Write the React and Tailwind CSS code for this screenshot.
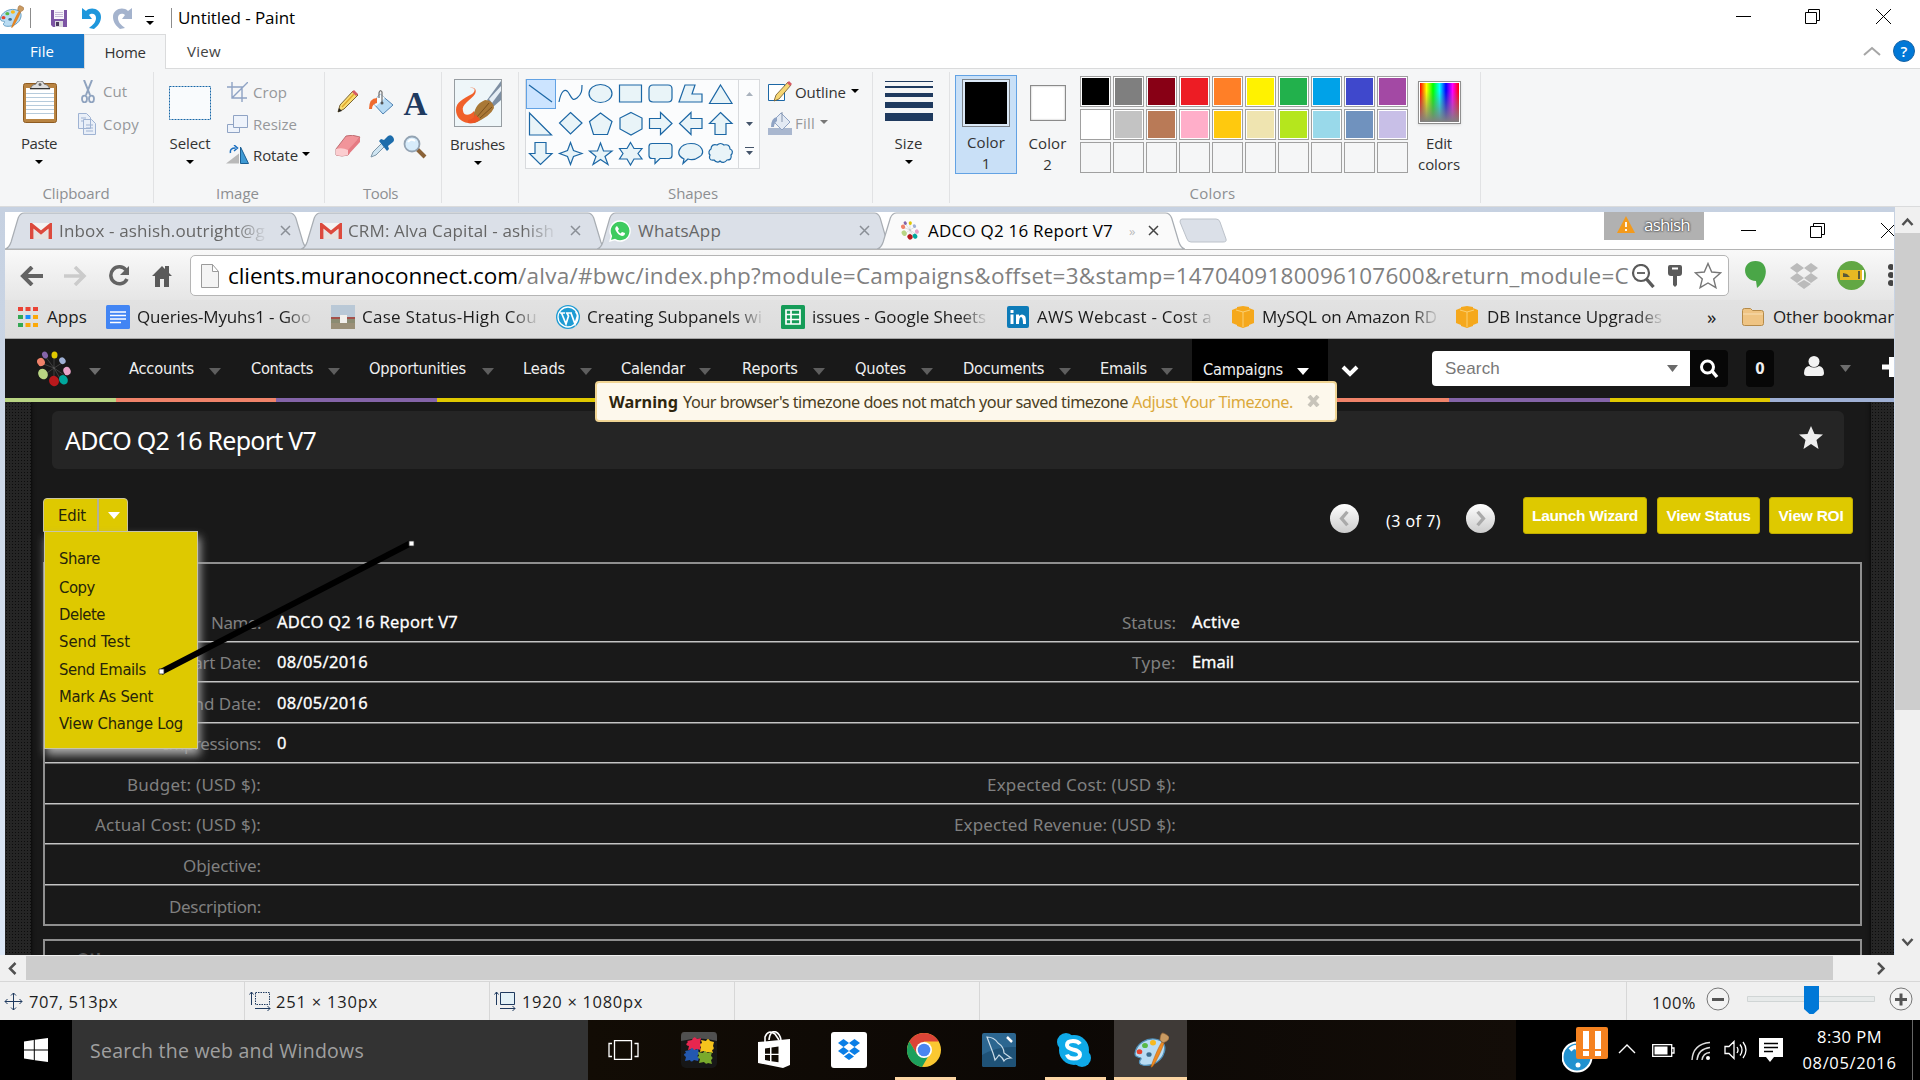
import React, { useLayoutEffect, useRef, useState } from "react";

/* Single line of text whose tracking is adjusted to fill a given width. */
function T({ w, className = "", children }) {
  const ref = useRef(null);
  const [spacing, setSpacing] = useState(0);
  useLayoutEffect(() => {
    const el = ref.current;
    const natural = el.getBoundingClientRect().width;
    setSpacing((w - natural) / el.textContent.length);
  }, [w]);
  return (
    <span ref={ref} className={"inline-block shrink-0 whitespace-pre " + className} style={{ letterSpacing: spacing + "px" }}>
      {children}
    </span>
  );
}

function Down({ className = "", w = 8, h = 4, fill = "#000" }) {
  return (
    <svg width={w} height={h} viewBox="0 0 8 4" preserveAspectRatio="none" className={"block shrink-0 " + className}>
      <path d="M0 0h8L4 4z" fill={fill} />
    </svg>
  );
}

function PaintIcon({ w, h, className = "" }) {
  return (
    <svg width={w} height={h} viewBox="0 0 36 40" preserveAspectRatio="none" className={"block shrink-0 " + className}>
      <path d="M2 24C3 13 14 6 23 8c9 2 10 9 8 15-2 8-10 15-20 14-6-1-5-5-3-7 1-3-6 0-6-6z" fill="#b9dcf3" stroke="#4f8fb9" strokeWidth="1.3" />
      <circle cx="16" cy="25" r="2.6" fill="#3b6d8f" />
      <circle cx="6.500" cy="22" r="2.800" fill="#e5432e" />
      <circle cx="12" cy="15" r="2.900" fill="#58b947" />
      <circle cx="20" cy="12" r="3" fill="#f8b91c" />
      <path d="M18 39c1-5 8-24 11-28l2 1c-1 5-8 22-12 27z" fill="#ee8a22" stroke="#b9610d" strokeWidth=".6" />
      <path d="M27 9c0-4 1-8 3-8 2 1 6 3 6 5 0 3-3 5-6 6z" fill="#c99a62" stroke="#936233" strokeWidth=".7" />
    </svg>
  );
}

function TitleBar() {
  return (
    <div className="flex h-[34px] shrink-0 bg-white">
      <PaintIcon w={25} h={23} className="-ml-px mt-[5px]" />
      <div className="ml-[6px] mt-2 h-5 w-px bg-[#8c8c8c]" />
      <svg width="16" height="17" viewBox="0 0 16 17" className="ml-5 mt-[10px] block shrink-0">
        <path d="M0 0h16v17H2l-2-2z" fill="#7c55a4" />
        <path d="M3 0h10v9H3z" fill="#f7f5fa" />
        <path d="M4 2.500h8M4 4.500h8M4 6.500h8" stroke="#c6b9d6" />
        <path d="M4 11h8v6H4z" fill="#d9d9de" />
        <path d="M5 12h3v4H5z" fill="#4c3a5f" />
      </svg>
      <svg width="20" height="22" viewBox="0 0 20 22" className="ml-[15px] mt-[7px] block shrink-0">
        <path d="M0 1l4 3c5-5 15-2 15 6 0 5-3 9-7 12l-5-1c4-3 7-6 7-10 0-5-5-5-7-3l3 4H0z" fill="#1e97dc" />
      </svg>
      <svg width="20" height="22" viewBox="0 0 20 22" className="ml-[11px] mt-[7px] block shrink-0">
        <path d="M19 1l-4 3C10-1 0 2 0 10c0 5 3 9 7 12l5-1c-4-3-7-6-7-10 0-5 5-5 7-3l-3 4h10z" fill="#a4b3cd" />
      </svg>
      <div className="ml-[12px] mt-4 flex w-[9px] flex-col items-center gap-1">
        <div className="h-px w-full bg-black" />
        <Down w={8} h={4} />
      </div>
      <div className="ml-[17px] mt-2 h-5 w-px bg-[#8c8c8c]" />
      <T w={117} className="ml-[6px] mt-1 text-[17px] leading-7 text-black">Untitled - Paint</T>
      <div className="ml-auto mr-[29px] mt-[9px] flex gap-[54px]">
        <svg width="15" height="15" className="block"><path d="M0 7.500h15" stroke="#000" /></svg>
        <svg width="15" height="15" fill="none" stroke="#000" className="block"><path d="M.5 3.500h11v11H.5zM3.500 3V.5h11v11H12" /></svg>
        <svg width="15" height="15" stroke="#000" className="ml-[2px] block"><path d="M0 0l15 15M15 0L0 15" /></svg>
      </div>
    </div>
  );
}

function RibbonTabs() {
  return (
    <div className="flex h-[35px] shrink-0 border-b border-[#dadbdc] bg-white text-[15px]">
      <div className="flex h-[34px] w-[84px] items-center justify-center bg-[#1979ca] text-white">
        <T w={24}>File</T>
      </div>
      <div className="flex h-[35px] w-[82px] items-center justify-center border border-b-0 border-[#dadbdc] bg-[#f5f6f7] text-[#333]">
        <T w={41}>Home</T>
      </div>
      <div className="ml-[21px] flex h-[34px] items-center text-[#444]">
        <T w={34}>View</T>
      </div>
      <svg width="18" height="10" fill="none" stroke="#a6a6a6" strokeWidth="2" className="ml-auto mt-3 block"><path d="M1 9l8-7 8 7" /></svg>
      <div className="ml-3 mr-[5px] mt-[6px] flex size-[22px] items-center justify-center rounded-full border border-[#1763a5] bg-[#0078d7] text-[15px] font-semibold text-white">?</div>
    </div>
  );
}

function Group({ className, label, lw, lc = "pr-[5px]", children }) {
  return (
    <div className={"flex h-[131px] shrink-0 flex-col border-r border-[#e1e2e4] " + className}>
      <div className="flex h-[111px]">{children}</div>
      <div className={"flex h-5 items-center justify-center text-[15px] text-[#8d8f92] " + lc}>
        {label && <T w={lw}>{label}</T>}
      </div>
    </div>
  );
}

const shapes = [
  "M3 6l23 17",
  "M3 23C5 12 9 9 12 13s4 10 9 6 5-8 5-13",
  "M26 14.500a11.500 9 0 1 1-23 0a11.500 9 0 1 1 23 0z",
  "M3.500 6h22v17h-22z",
  "M7 6h15q4 0 4 4v9q0 4-4 4H7q-4 0-4-4v-9q0-4 4-4z",
  "M9 6h10l-3 9h10v8H3z",
  "M14.500 6L26 24.500H3.500z",
  "M3.500 4v22h22z",
  "M14.500 3.500L26 14 14.500 25 3.500 14z",
  "M14.500 4L26 12.500 21.500 25.500h-14L3.500 12.500z",
  "M15 3.500l11 5.500v11l-11 6-11-6V9z",
  "M3.500 9.500h11v-6L26 14.500 14.500 25.500v-6h-11z",
  "M26 9.500H15v-6L3.500 14.500 15 25.500v-6h11z",
  "M14.500 3.500L26 14.500h-6v11H9v-11H3.500z",
  "M9 3.500h11v11h6L14.500 25.500 3.500 14.500H9z",
  "M14.500 3.500l3 8 8.500 3-8.500 3-3 8-3-8-8-3 8-3z",
  "M14.500 4l3 8h8.500l-7 5.500 3 8-7.500-5-7.500 5 3-8L3.500 12h8z",
  "M14.500 3.500l3.500 6h8l-4 5 4 5.500h-8l-3.500 6-3.500-6H3.500l3.500-5.500-3.500-5H11z",
  "M6 4.500h17q3 0 3 3v9q0 3-3 3H14l-5 5v-5H6q-3 0-3-3v-9q0-3 3-3z",
  "M8 20C-2 15 4 4.500 15 4.500S30 14 23 18c-4 3-8 3-11 2l-5 4.500z",
  "M8 21c-5 1-5-3-4-5-2-2-1-5 1-6 0-4 3-5 6-4 2-2 5-2 7 0 4-1 6 1 6 4 3 1 3 4 1 6 1 4-1 5-4 5-2 3-5 3-7 1-2 2-4 1-6-1z",
];

const palette = [
  ["bg-black", "bg-[#7f7f7f]", "bg-[#880015]", "bg-[#ed1c24]", "bg-[#ff7f27]", "bg-[#fff200]", "bg-[#22b14c]", "bg-[#00a2e8]", "bg-[#3f48cc]", "bg-[#a349a4]"],
  ["bg-white", "bg-[#c3c3c3]", "bg-[#b97a57]", "bg-[#ffaec9]", "bg-[#ffc90e]", "bg-[#efe4b0]", "bg-[#b5e61d]", "bg-[#99d9ea]", "bg-[#7092be]", "bg-[#c8bfe7]"],
];

function Ribbon() {
  return (
    <div className="flex h-[138px] shrink-0 border-b border-[#dadbdc] bg-[#f5f6f7] pt-[3px] text-[15px] leading-5 text-[#333]">
      <Group className="w-[154px]" label="Clipboard" lw={67} lc="pr-px">
        <div className="flex w-[78px] flex-col items-center">
          <svg width="36" height="43" viewBox="0 0 36 43" className="ml-[2px] mt-[9px] block">
            <rect x="1.500" y="2.500" width="33" height="39" rx="2" fill="#b98442" stroke="#8f5c22" />
            <path d="M4 7h28v31H4z" fill="#fff" />
            <path d="M4 12.500h28M4 16.500h28M4 20.500h28M4 24.500h28M4 28.500h28M4 32.500h28" stroke="#b6cbdc" />
            <path d="M8 8q2-5 6-5 0-3 4-3t4 3q4 0 6 5z" fill="#ddd" stroke="#666" strokeWidth=".8" />
            <path d="M8 7.500h20" stroke="#333" />
            <circle cx="18" cy="3.500" r="1.500" fill="#666" />
          </svg>
          <T w={36} className="mt-[9px]">Paste</T>
          <Down className="mt-[7px]" />
        </div>
        <div className="flex flex-col text-[#96989b]">
          <div className="mt-[7px] flex h-6 items-center">
            <svg width="14" height="23" viewBox="0 0 14 23" fill="none" stroke="#8fa3bf" className="ml-[3px] block">
              <path d="M3 0l6 15M11 0L5 15" strokeWidth="2" />
              <ellipse cx="3.500" cy="19" rx="2.500" ry="3.300" strokeWidth="1.800" />
              <ellipse cx="10.500" cy="19" rx="2.500" ry="3.300" strokeWidth="1.800" />
            </svg>
            <T w={24} className="ml-[8px]">Cut</T>
          </div>
          <div className="mt-[9px] flex h-6 items-center">
            <svg width="18" height="22" viewBox="0 0 18 22" fill="#e9eff8" stroke="#9fb3d3" className="block">
              <path d="M.5.5h8l4 4v11H.5zM5.500 6.500h8l4 4v11h-12z" />
              <path d="M3 5h5M3 8h3M8 12h7M8 15h7M8 18h7" />
            </svg>
            <T w={36} className="ml-[7px]">Copy</T>
          </div>
        </div>
      </Group>

      <Group className="w-[171px]" label="Image" lw={43} lc="pr-[3px]">
        <div className="flex w-[72px] flex-col items-center">
          <svg width="44" height="36" className="mt-[13px] block"><rect x="1.500" y="1.500" width="41" height="33" fill="#f9fbfd" stroke="#1767a8" strokeDasharray="2 1" /></svg>
          <T w={41} className="mt-3">Select</T>
          <Down className="mt-[7px]" />
        </div>
        <div className="flex flex-col text-[#96989b]">
          <div className="mt-[8px] flex h-6 items-center">
            <svg width="21" height="21" fill="none" stroke="#8fa3c4" strokeWidth="1.400" className="ml-px block"><path d="M5 0v16h15M0 5h15v15M5 16L21 0" /></svg>
            <T w={34} className="ml-[5px]">Crop</T>
          </div>
          <div className="mt-2 flex h-6 items-center">
            <svg width="21" height="19" fill="#eef3fb" stroke="#8fa3c4" className="ml-px block"><path d="M.5 9.500h12v8H.5z" /><path d="M6.500.5h14v12h-14z" /></svg>
            <T w={44} className="ml-[5px]">Resize</T>
          </div>
          <div className="mt-[7px] flex h-6 items-center text-[#333]">
            <svg width="24" height="20" className="block">
              <path d="M0 18.500h13v-10z" fill="#b9b9b9" />
              <path d="M14.500 2v16.500h8z" fill="#3f9ad4" stroke="#1b5f93" />
              <path d="M4.500 8q-1-5 5-5M8 0l3.500 3L8 6" fill="none" stroke="#1a6fc0" strokeWidth="1.500" />
            </svg>
            <T w={45} className="ml-[3px]">Rotate</T>
            <Down className="-mt-0.5 ml-1" />
          </div>
        </div>
      </Group>

      <Group className="w-[117px]" label="Tools" lw={35}>
        <div className="ml-[10px] mt-[18px] grid h-[70px] grid-cols-[34px_34px_28px] grid-rows-[45px_25px]">
          <svg width="24" height="24" viewBox="0 0 24 24">
            <path d="M3 22l2-7L18 1l5 4L9 19z" fill="#f9dc72" stroke="#6b5526" strokeWidth=".9" />
            <path d="M7 17L19 4" stroke="#e0a92a" strokeWidth="1.500" />
            <path d="M17 2l2-2 4 4-2 2z" fill="#d75b64" /><path d="M3 22l1-4 3 3z" fill="#222" />
          </svg>
          <svg width="26" height="26" viewBox="0 0 26 26" className="-ml-px">
            <path d="M12 4l13 11-10 9L5 13z" fill="#b9dcf5" stroke="#4f82b2" />
            <path d="M12 4l5 4L8 16l-3-3z" fill="#f5fbff" />
            <path d="M9 8Q1 8 1 19h3q0-5 5-6z" fill="#ee6a2f" />
            <path d="M14 13V2q-2-3-3 1v5" fill="none" stroke="#777" strokeWidth="1.300" /><circle cx="14" cy="13" r="1.500" fill="#555" />
          </svg>
          <span className="-ml-[3px] block text-center font-['Liberation_Serif'] text-[33px] font-bold leading-[28px] text-[#1f3a5f]">A</span>
          <svg width="26" height="24" viewBox="0 0 26 24">
            <path d="M1 14L11 1q6-2 14 1l-9 13-3 5q-6 2-12 0z" fill="#f1949a" stroke="#b05a5f" strokeWidth=".8" />
            <path d="M1 14q6-2 12 1v5q-6 2-12 0z" fill="#fbcdd0" /><path d="M13 15L25 2v5L13 20z" fill="#e57a82" />
          </svg>
          <svg width="25" height="24" viewBox="0 0 25 24">
            <path d="M2 22l2-5 9-9 3 3-9 9z" fill="#cfe5f2" stroke="#7d96a8" />
            <path d="M10 6l2-2 3 1 4-4q3-2 5 1t0 5l-5 4 1 3-2 2z" fill="#1c6cab" />
          </svg>
          <svg width="24" height="24" viewBox="0 0 24 24">
            <path d="M14 14l8 8" stroke="#8a6238" strokeWidth="4" />
            <circle cx="9" cy="9" r="7.500" fill="#d7ecfb" stroke="#93a3b3" strokeWidth="1.800" /><path d="M5 7q3-4 7-1" stroke="#fff" strokeWidth="2" fill="none" />
          </svg>
        </div>
      </Group>

      <Group className="w-[77px]">
        <div className="flex w-[71px] flex-col items-center">
          <svg width="48" height="48" viewBox="0 0 48 48" className="mt-[7px] block">
            <rect x=".5" y=".5" width="47" height="47" fill="#eef6f9" stroke="#979da2" />
            <path d="M33 21L47 2v19l-8 7z" fill="#7d8fa3" /><path d="M35 20L47 7v5l-9 12z" fill="#e6eef5" />
            <path d="M18 9c4 0 3 4 0 6C9 20 2 23 2 31c0 7 5 12 12 13 6 1 10-1 12-3l-6-9c-3 4-10 6-11 0-2-7 8-11 12-17 2-4 0-7-5-6z" fill="#f0602a" />
            <path d="M20 40q-1-14 11-19 8 0 9 8-4 9-20 15z" fill="#a97836" /><path d="M23 38l12-14M26 39l12-11" stroke="#7b501c" />
            <path d="M14 41q7-1 7-6l5 5q-4 5-12 4z" fill="#ee5424" />
          </svg>
          <T w={55} className="mt-[7px]">Brushes</T>
          <Down className="mt-[7px]" />
        </div>
      </Group>

      <Group className="w-[354px]" label="Shapes" lw={50}>
        <div className="ml-[6px] mt-[7px] flex h-[90px] w-[235px] border border-[#d8dadd] bg-[#fbfcfd]">
          <div className="grid h-[88px] w-[212px] grid-cols-[repeat(7,30px)] grid-rows-[repeat(3,30px)]">
            {shapes.map((d, i) => (
              <svg key={i} width="30" height="30" viewBox="0 0 30 30" className={i === 0 ? "-mt-px block bg-[#cce4ff] outline-1 -outline-offset-1 outline-[#62a2e4]" : "-mt-px block"}>
                <path d={d} fill={i < 2 ? "none" : "#e9f4f8"} stroke="#1c67a5" strokeWidth="1.200" />
              </svg>
            ))}
          </div>
          <div className="flex w-[21px] flex-col items-center border-l border-[#d8dadd]">
            <Down className="mt-3 rotate-180" w={7} fill="#a9b2bd" />
            <Down className="mt-[26px]" w={7} fill="#44546a" />
            <div className="mt-[21px] h-px w-[9px] bg-[#44546a]" />
            <Down className="mt-[3px]" w={7} fill="#44546a" />
          </div>
        </div>
        <div className="ml-2 flex flex-col">
          <div className="mt-[8px] flex h-6 items-center">
            <svg width="24" height="22" viewBox="0 0 24 22"><path d="M.5 3.500h16v16H.5z" fill="#fff" stroke="#1c67a5" /><path d="M6 20l2-6L20 1l3 3-12 14z" fill="#f6d674" stroke="#6e5526" strokeWidth=".8" /><path d="M19 2l2-2 3 3-2 2z" fill="#d75b64" /></svg>
            <T w={51} className="ml-[3px]">Outline</T>
            <Down className="-mt-0.5 ml-[5px]" />
          </div>
          <div className="mt-[7px] flex h-6 items-center text-[#96989b]">
            <svg width="24" height="24" viewBox="0 0 24 24"><path d="M0 17h24v7H0z" fill="#a9b7cf" /><path d="M13 2l9 9-8 8-9-9z" fill="#e3eaf4" stroke="#8fa3c4" /><path d="M9 6Q3 7 3 16h3q0-4 3-6z" fill="#8fa3c4" /><path d="M14 11V1" stroke="#8494ad" /></svg>
            <T w={20} className="ml-[3px]">Fill</T>
            <Down className="-mt-0.5 ml-[5px]" fill="#777" />
          </div>
        </div>
      </Group>

      <Group className="w-[77px]">
        <div className="flex w-[71px] flex-col items-center">
          <div className="mt-[9px] h-px w-12 bg-[#1f3a5f]" />
          <div className="mt-1 h-0.5 w-12 bg-[#1f3a5f]" />
          <div className="mt-[5px] h-1 w-12 bg-[#1f3a5f]" />
          <div className="mt-[5px] h-1.5 w-12 bg-[#1f3a5f]" />
          <div className="mt-[5px] h-2 w-12 bg-[#1f3a5f]" />
          <T w={28} className="mt-3">Size</T>
          <Down className="mt-[7px]" />
        </div>
      </Group>

      <Group className="w-[531px]" label="Colors" lw={46}>
        <div className="ml-[5px] mt-[3px] flex h-[99px] w-[62px] flex-col items-center border border-[#62a2e4] bg-[#c9e0f7] pt-[3px]">
          <div className="size-12 border border-[#7d8389] bg-[#dbe9f7] p-0.5"><div className="size-full bg-black" /></div>
          <T w={38} className="mt-[5px]">Color</T>
          <span className="mt-px">1</span>
        </div>
        <div className="flex w-[61px] flex-col items-center pt-[13px]">
          <div className="size-9 border border-[#8b8b8b] bg-white shadow-[inset_0_0_2px_#aaa]" />
          <T w={38} className="mt-3">Color</T>
          <span className="mt-px">2</span>
        </div>
        <div className="ml-[2px] mt-1 grid h-[97px] grid-cols-[repeat(10,31px)] grid-rows-[repeat(3,31px)] gap-[2px]">
          {palette.flat().map((c, i) => (
            <div key={i} className="border border-[#a0a0a0] bg-white p-px"><div className={"size-full " + c} /></div>
          ))}
          {Array.from({ length: 10 }, (_, i) => <div key={i} className="border border-[#a0a0a0]" />)}
        </div>
        <div className="ml-2 flex w-[46px] flex-col items-center">
          <div className="mt-[9px] size-[43px] border border-[#8f8f8f] bg-white p-px shadow-sm">
            <div className="size-full bg-[linear-gradient(to_bottom,transparent_20%,#808080),linear-gradient(to_right,red,#ff0,lime,cyan,blue,magenta,red)]" />
          </div>
          <T w={26} className="mt-[9px]">Edit</T>
          <T w={42} className="mt-px">colors</T>
        </div>
      </Group>
    </div>
  );
}

function MuranoLogo({ w, h, className = "" }) {
  return (
    <svg width={w} height={h} viewBox="0 0 34 36" preserveAspectRatio="none" className={"block shrink-0 " + className}>
      <path d="M17 17L8 5M17 17l-13-5M17 17l8-5M17 17l10 7M17 17v12M17 17L7 24M17 17l0-12M17 17l7 12" stroke="#777" strokeWidth=".4" />
      <ellipse cx="8" cy="4" rx="2.800" ry="3.600" fill="#8464a8" transform="rotate(-25 8 4)" />
      <ellipse cx="17.500" cy="4" rx="3" ry="3.500" fill="#e0c800" />
      <ellipse cx="25.500" cy="10" rx="3" ry="3.500" fill="#9fb0d4" transform="rotate(-35 25 10)" />
      <ellipse cx="30" cy="20" rx="3.600" ry="4.200" fill="#e8a3c8" transform="rotate(-20 30 20)" />
      <ellipse cx="26.500" cy="29" rx="4.200" ry="5" fill="#00a79d" transform="rotate(-30 26 29)" />
      <ellipse cx="17" cy="30" rx="4.800" ry="5.300" fill="#b8191c" transform="rotate(-30 17 30)" />
      <ellipse cx="6" cy="23" rx="4.600" ry="5.500" fill="#b9d583" transform="rotate(-30 6 23)" />
      <ellipse cx="4" cy="11" rx="3.800" ry="4.200" fill="#f0826a" transform="rotate(-25 4 11)" />
    </svg>
  );
}

function Gmail({ className }) {
  return (
    <svg width="22" height="16" viewBox="0 0 22 16" className={"block shrink-0 " + className}>
      <path d="M0 0h22v16H0z" fill="#f4f4f4" /><path d="M3 16V6l8 6 8-6v10z" fill="#e6e3e0" />
      <path d="M1.700 16V2L11 9.500 20.300 2v14" fill="none" stroke="#dc4a3d" strokeWidth="3.400" />
    </svg>
  );
}

function WhatsApp({ className }) {
  return (
    <svg width="22" height="22" viewBox="0 0 22 22" className={"block shrink-0 " + className}>
      <path d="M11 1a10 10 0 1 1-5 18.600L1 21l1.400-5A10 10 0 0 1 11 1z" fill="#3fcb5f" stroke="#fff" strokeWidth="1.400" />
      <path d="M8 6q-3 2-1 5 2 4 6 5 3 0 3-3l-3-1-1.500 1.500Q9.500 12.500 9 10.500L10 9z" fill="#fff" />
    </svg>
  );
}

function TabX({ className = "", stroke = "#8a8f96" }) {
  return <svg width="11" height="11" className={"block shrink-0 " + className}><path d="M1 1l9 9M10 1l-9 9" stroke={stroke} strokeWidth="1.500" /></svg>;
}

function fadeText(w, cls, text) {
  return <T w={w} className={"[mask-image:linear-gradient(to_right,#000_85%,rgba(0,0,0,.1))] " + cls}>{text}</T>;
}

function Tab({ className, active, children }) {
  return (
    <div className={"relative flex h-[37px] shrink-0 items-center " + className}>
      <svg viewBox="0 0 300 37" preserveAspectRatio="none" className="absolute inset-0 size-full">
        <path d="M0 37q4-1 6-7L13 6q2-5 6-5h262q4 0 6 5l7 24q2 6 6 7z" fill={active ? "#fafafa" : "#dbe0e8"} stroke="#a8adb3" strokeWidth="1.200" />
      </svg>
      <div className="relative flex items-center">{children}</div>
    </div>
  );
}

function BrowserTabs() {
  return (
    <div className="flex h-[37px] shrink-0 bg-white text-[17px] leading-7 text-[#666]">
      <Tab className="w-[304px]">
        <Gmail className="ml-[25px]" />
        {fadeText(206, "ml-[7px]", "Inbox - ashish.outright@g")}
        <TabX className="ml-[15px]" />
      </Tab>
      <Tab className="-ml-2 w-[306px]">
        <Gmail className="ml-[19px]" />
        {fadeText(206, "ml-[6px]", "CRM: Alva Capital - ashish")}
        <TabX className="ml-[16px]" />
      </Tab>
      <Tab className="-ml-[10px] w-[296px]">
        <WhatsApp className="ml-[12px]" />
        <T w={83} className="ml-[7px]">WhatsApp</T>
        <TabX className="ml-[138px]" />
      </Tab>
      <Tab className="z-10 -ml-[16px] w-[308px]" active>
        <MuranoLogo w={18} h={19} className="ml-[24px]" />
        <T w={185} className="ml-[9px] text-black">ADCO Q2 16 Report V7</T>
        <span className="ml-4 text-[13px] text-[#bbb]">»</span>
        <TabX className="ml-[13px]" stroke="#444" />
      </Tab>
      <svg width="50" height="26" viewBox="0 0 50 26" className="-ml-[7px] mt-[6px] block shrink-0"><path d="M4 1h34q3 0 4 3l6 17q1 3-3 3H13q-3 0-4-3L2 4q0-3 2-3z" fill="#dbe0e8" stroke="#bcc2ca" /></svg>
      <div className="ml-auto flex h-7 w-[100px] items-center bg-[#b1b1b1]">
        <svg width="18" height="17" viewBox="0 0 18 17" className="-mt-1 ml-[13px] block"><path d="M9 0l9 17H0z" fill="#f39a1c" /><path d="M9 6v5M9 13v2" stroke="#fff" strokeWidth="1.800" /></svg>
        <T w={46} className="-mt-0.5 ml-[9px] text-white [text-shadow:0_0_2px_#333,0_0_2px_#333]">ashish</T>
      </div>
      <svg width="15" height="15" className="ml-[37px] mt-[11px] block shrink-0"><path d="M0 7.500h15" stroke="#000" /></svg>
      <svg width="15" height="15" fill="none" stroke="#000" className="ml-[54px] mt-[11px] block shrink-0"><path d="M.5 3.500h11v11H.5zM3.500 3V.5h11v11H12" /></svg>
      <svg width="13" height="15" stroke="#000" className="ml-[56px] mt-[11px] block shrink-0"><path d="M0 0l15 15M15 0L0 15" /></svg>
    </div>
  );
}

function AddressBar() {
  return (
    <div className="flex h-[51px] shrink-0 items-center border-t border-[#b4b4b4] bg-gradient-to-b from-[#f9f9f9] to-[#e6e6e6]">
      <svg width="24" height="20" className="ml-[15px] mt-px block shrink-0"><path d="M23 10H3M12 1l-9 9 9 9" fill="none" stroke="#636363" strokeWidth="4" /></svg>
      <svg width="24" height="20" className="ml-[19px] mt-px block shrink-0"><path d="M1 10h20M12 1l9 9-9 9" fill="none" stroke="#cbcbcb" strokeWidth="3.500" /></svg>
      <svg width="22" height="22" className="ml-[21px] mt-px block shrink-0"><path d="M18 5A8.500 8.500 0 1 0 19 14" fill="none" stroke="#636363" strokeWidth="3.500" /><path d="M21 1v9h-9z" fill="#636363" /></svg>
      <svg width="20" height="22" className="ml-[22px] mt-0.5 block shrink-0"><path d="M0 11L10 1l3 3V1h4v7l3 3h-3v11h-5v-8H8v8H3V11z" fill="#5a5a5a" /></svg>
      <div className="ml-[18px] mt-px flex h-[41px] w-[1539px] shrink-0 items-center rounded-[5px] border border-[#b5b5b5] bg-white text-[22.5px]">
        <svg width="18" height="24" fill="#f4f4f4" stroke="#9b9b9b" className="ml-[10px] block shrink-0"><path d="M.5.5h11l6 7v16H.5zM11.500.5v7h6" /></svg>
        <T w={290} className="ml-[9px] text-black">clients.muranoconnect.com</T>
        <T w={1111} className="text-[#808080]">/alva/#bwc/index.php?module=Campaigns&amp;offset=3&amp;stamp=1470409180096107600&amp;return_module=C</T>
        <svg width="24" height="24" fill="none" stroke="#5a5a5a" strokeWidth="2.200" className="ml-[2px] block shrink-0"><circle cx="10" cy="9" r="8" /><path d="M6 9h8" strokeWidth="1.800" /><path d="M15.500 15l7 8" strokeWidth="3.400" /></svg>
        <svg width="14" height="22" className="ml-[13px] block shrink-0"><path d="M2 0h10q2 0 2 2v6q0 3-3 3H9v9l-2 2-2-2v-9H3q-3 0-3-3V2q0-2 2-2z" fill="#5a5a5a" /><path d="M4 3.500h6" stroke="#fff" strokeWidth="2" /></svg>
        <svg width="28" height="27" viewBox="0 0 28 27" className="ml-[12px] block shrink-0"><path d="M14 1.500l3.700 8.500 9 .8-7 6.200 2.200 8.700-7.900-4.700-7.900 4.700L8.300 17l-7-6.200 9-.8z" fill="#fff" stroke="#777" strokeWidth="1.400" /></svg>
      </div>
      <svg width="21" height="28" className="ml-[16px] block shrink-0"><path d="M10.500 0C24 0 24 18 12 27l-1-7C-3 20-4 0 10.500 0z" fill="#4aa647" /></svg>
      <svg width="28" height="26" viewBox="0 0 28 26" className="ml-[24px] mt-px block shrink-0" fill="#bbb"><path d="M7 0l7 5-7 5-7-5zM21 0l7 5-7 5-7-5zM7 10l7 5-7 5-7-5zM21 10l7 5-7 5-7-5zM14 17l7 4-7 5-7-5z" /></svg>
      <div className="ml-[19px] flex size-[29px] shrink-0 items-center justify-center rounded-full bg-[#62a744]">
        <svg width="24" height="10" className="block"><path d="M0 0h24v10H0z" fill="#e8b923" /><path d="M3 7V3l4 1 3 3zM18 1h2v8h-2z" fill="#5a5a3a" /><path d="M22 0h2v10h-2z" fill="#fff" /></svg>
      </div>
      <svg width="5" height="22" className="ml-[22px] block shrink-0" fill="#444"><circle cx="3" cy="3" r="3" /><circle cx="3" cy="11" r="3" /><circle cx="3" cy="19" r="3" /></svg>
    </div>
  );
}

function AwsBox({ className }) {
  return (
    <svg width="22" height="22" viewBox="0 0 22 22" className={"block shrink-0 " + className}>
      <path d="M0 4l5-2v17l-5-2zM22 4l-5-2v17l5-2zM5 1l6-1 6 1v19l-6 2-6-2z" fill="#f5a81c" /><path d="M4 4l7 2 7-2M11 6v15" stroke="#fbd072" fill="none" />
    </svg>
  );
}

function Bookmarks() {
  return (
    <div className="flex h-[39px] shrink-0 items-center border-b border-[#a5a5a5] bg-gradient-to-b from-[#e2e2e2] to-[#dcdcdc] pb-1 text-[17px] text-[#1c1c1c]">
      <svg width="20" height="20" className="ml-[13px] block shrink-0">
        <path d="M0 0h5v4H0zM7.500 0h5v4h-5zM15 0h5v4h-5z" fill="#ea4335" /><path d="M0 8h5v4H0zM0 16h5v4H0z" fill="#34a853" /><path d="M7.500 8h5v4h-5z" fill="#1a8cff" /><path d="M15 8h5v4h-5zM7.500 16h5v4h-5zM15 16h5v4h-5z" fill="#fba90a" />
      </svg>
      <T w={40} className="ml-[9px]">Apps</T>
      <svg width="24" height="24" className="ml-[19px] block shrink-0"><rect width="24" height="24" rx="1.500" fill="#4285f4" /><path d="M4 7h16M4 10.500h16M4 14h16M4 17.500h11" stroke="#fff" strokeWidth="1.700" /></svg>
      {fadeText(174, "ml-[7px]", "Queries-Myuhs1 - Goo")}
      <svg width="24" height="24" className="ml-[20px] block shrink-0"><path d="M0 0h24v24H0z" fill="#b9c8d6" /><path d="M0 12h24v12H0z" fill="#8b8b72" /><path d="M0 12h24v2H0z" fill="#a3504a" /><path d="M9 10h7v8H9z" fill="#f2f0ec" /><path d="M0 18h24v6H0z" fill="#9a8f77" /></svg>
      {fadeText(175, "ml-[7px]", "Case Status-High Cou")}
      <svg width="24" height="24" className="ml-[19px] block shrink-0"><circle cx="12" cy="12" r="12" fill="#1e9bd3" /><circle cx="12" cy="12" r="10" fill="none" stroke="#fff" strokeWidth="1.300" /><path d="M4 8h5M5.500 8l4.500 11 2.500-8-1.500-3h4l4 11 2.500-8q0-3-2-4M10 8h6" stroke="#fff" strokeWidth="1.700" fill="none" /></svg>
      {fadeText(175, "ml-[7px]", "Creating Subpanels wi")}
      <svg width="24" height="24" className="ml-[19px] block shrink-0"><rect width="24" height="24" rx="1.500" fill="#159c58" /><path d="M5 5h14v14H5zM5 9.500h14M5 14.500h14M10 5v14" stroke="#fff" strokeWidth="1.700" fill="none" /></svg>
      {fadeText(174, "ml-[7px]", "issues - Google Sheets")}
      <svg width="22" height="22" className="ml-[21px] block shrink-0"><rect width="22" height="22" rx="2" fill="#0d7bb8" /><path d="M3.500 8.500h3V18h-3zM3.500 4h3v3h-3zM9 8.500h3v1.500q3-3 6 0 1 1 1 8h-3q0-7-2-7t-2 7H9z" fill="#fff" /></svg>
      {fadeText(175, "ml-[8px]", "AWS Webcast - Cost a")}
      <AwsBox className="ml-[20px]" />
      {fadeText(175, "ml-[8px]", "MySQL on Amazon RD")}
      <AwsBox className="ml-[19px]" />
      {fadeText(175, "ml-[9px]", "DB Instance Upgrades")}
      <T w={10} className="ml-[45px] text-[19px]">»</T>
      <div className="ml-[13px] h-8 w-px bg-[#c9d3dd]" />
      <svg width="22" height="18" className="ml-[12px] block shrink-0"><path d="M.5 2.500q0-2 2-2h6l2 2h9q2 0 2 2v11q0 2-2 2h-17q-2 0-2-2z" fill="#efc483" stroke="#b58a48" /><path d="M1 6h20" stroke="#f9dfb4" /></svg>
      <T w={121} className="ml-[9px]">Other bookmar</T>
    </div>
  );
}

const menus = [
  ["Accounts", 65, "ml-[28px]", "ml-[15px]"],
  ["Contacts", 62, "ml-[30px]", "ml-[15px]"],
  ["Opportunities", 97, "ml-[29px]", "ml-[16px]"],
  ["Leads", 42, "ml-[29px]", "ml-[15px]"],
  ["Calendar", 64, "ml-[29px]", "ml-[14px]"],
  ["Reports", 56, "ml-[31px]", "ml-[15px]"],
  ["Quotes", 51, "ml-[30px]", "ml-[15px]"],
  ["Documents", 81, "ml-[30px]", "ml-[15px]"],
  ["Emails", 47, "ml-[29px]", "ml-[14px]"],
];

function CrmNav() {
  return (
    <div className="relative h-[63px] shrink-0">
      <div className="flex h-[59px] items-center bg-[#191919] font-['DejaVu_Sans_Condensed'] text-[16.3px] text-[#efefef]">
        <MuranoLogo w={34} h={36} className="ml-[32px]" />
        <Down w={12} h={7} fill="#6d6d6d" className="ml-[18px] mt-[5px]" />
        {menus.map(([name, w, a, b]) => (
          <React.Fragment key={name}>
            <T w={w} className={"mt-[2px] " + a}>{name}</T>
            <Down w={12} h={7} fill="#5e5e5e" className={"mt-[5px] " + b} />
          </React.Fragment>
        ))}
        <div className="ml-[19px] flex h-[59px] w-[136px] shrink-0 items-center bg-black">
          <T w={80} className="ml-[11px] mt-[3px]">Campaigns</T>
          <Down w={12} h={7} fill="#fff" className="ml-[14px] mt-[5px]" />
        </div>
        <svg width="18" height="13" className="ml-[13px] mt-[5px] block shrink-0"><path d="M2 2l7 7 7-7" fill="none" stroke="#fff" strokeWidth="4" /></svg>
        <div className="ml-[73px] flex h-[35px] w-[258px] shrink-0 items-center rounded-l-sm bg-white font-['Liberation_Sans'] text-[17px] text-[#777]">
          <T w={55} className="ml-[13px]">Search</T>
          <Down w={11} h={7} fill="#6a6a6a" className="ml-auto mr-3" />
        </div>
        <div className="flex h-[37px] w-[38px] shrink-0 items-center justify-center rounded-r bg-[#070707]">
          <svg width="20" height="20"><circle cx="8.500" cy="8" r="6" fill="none" stroke="#fff" strokeWidth="3" /><path d="M13 12l5 6" stroke="#fff" strokeWidth="3.500" /></svg>
        </div>
        <div className="ml-[18px] flex h-[37px] w-7 shrink-0 items-center justify-center rounded bg-[#070707] pt-[2px] text-[15px] font-bold">0</div>
        <svg width="20" height="20" viewBox="0 0 20 20" className="-mt-[5px] ml-[30px] block shrink-0"><circle cx="10" cy="5.500" r="5.500" fill="#f2f2f2" /><path d="M0 17q0-6 5-7 5 3 10 0 5 1 5 7 0 3-3 3H3q-3 0-3-3z" fill="#f2f2f2" /></svg>
        <Down w={11} h={7} fill="#6d6d6d" className="ml-[16px]" />
        <svg width="13" height="20" className="-mt-1 ml-[31px] block shrink-0"><path d="M0 7.500h7V0h6v20H7v-7.500H0z" fill="#fff" /></svg>
      </div>
      <div className="flex h-1">
        <div className="w-[111px] bg-[#b9d583]" />
        <div className="w-[160px] bg-[#f0836a]" />
        <div className="w-[161px] bg-[#8464a8]" />
        <div className="w-[160px] bg-[#dfc800]" />
        <div className="w-[691px] bg-[#9fb0d4]" />
        <div className="w-[161px] bg-[#f0836a]" />
        <div className="w-[161px] bg-[#8464a8]" />
        <div className="w-[160px] bg-[#dfc800]" />
        <div className="flex-1 bg-[#9fb0d4]" />
      </div>
      <div className="absolute left-[590px] top-[42px] z-10 flex h-[41px] w-[742px] items-center rounded border-2 border-[#f0d493] bg-[#fdf8ec] font-['Noto_Sans'] text-[16.3px] text-[#4b401f]">
        <T w={69} className="ml-[12px] mt-px font-bold text-[#2e260e]">Warning</T>
        <T w={445} className="ml-[5px] mt-px">Your browser's timezone does not match your saved timezone</T>
        <T w={161} className="ml-[4px] mt-px text-[#dba93c]">Adjust Your Timezone.</T>
        <svg width="13" height="12" className="-mt-0.5 ml-[14px] block"><path d="M2 1l9 10M11 1L2 11" stroke="#c8c4ba" strokeWidth="4" /></svg>
      </div>
    </div>
  );
}

const items = [
  ["Share", 41, "h-[29px]"],
  ["Copy", 36, "h-[28px]"],
  ["Delete", 46, "h-[27px]"],
  ["Send Test", 71, "h-[27px]"],
  ["Send Emails", 87, "h-[28px]"],
  ["Mark As Sent", 94, "h-[27px]"],
  ["View Change Log", 124, "h-[27px]"],
];

const rows = [
  ["Name:", 50, "ADCO Q2 16 Report V7", 181, "Status:", 54, "Active", 48],
  ["Start Date:", 83, "08/05/2016", 91, "Type:", 44, "Email", 42],
  ["End Date:", 77, "08/05/2016", 91],
  ["Impressions:", 98, "0", 11],
  ["Budget: (USD $):", 134, "", 0, "Expected Cost: (USD $):", 189],
  ["Actual Cost: (USD $):", 166, "", 0, "Expected Revenue: (USD $):", 222],
  ["Objective:", 78],
  ["Description:", 92],
];

function Texture({ className }) {
  return <div className={"h-[553px] shrink-0 bg-[#252525] bg-[radial-gradient(#0c0c0c_40%,transparent_45%)] bg-[size:3px_3px] shadow-[0_0_4px_#000] " + className} />;
}

function CrmPage() {
  return (
    <div className="flex h-[553px] shrink-0 overflow-hidden bg-[#191919] font-['DejaVu_Sans_Condensed'] text-white">
      <Texture className="w-[26px]" />
      <div className="flex w-[1841px] flex-col">
        <div className="ml-[21px] mt-[9px] flex h-[58px] w-[1792px] shrink-0 items-center rounded-md bg-[#252525]">
          <T w={251} className="ml-[13px] mt-[2px] font-['Noto_Sans'] text-[25px]">ADCO Q2 16 Report V7</T>
          <svg width="24" height="23" viewBox="0 0 24 23" className="-mt-[6px] ml-auto mr-[21px] block"><path d="M12 0l3.500 8 8.500.500-6.500 5.500 2 9L12 18l-7.500 5 2-9L0 8.500 8.500 8z" fill="#eee" /></svg>
        </div>
        <div className="relative ml-3 mt-[28px] flex h-[38px] shrink-0">
          <div className="mt-px flex h-[34px] w-[85px] rounded-t border border-[#c9c4a0] bg-[#dec900] text-[16.5px] text-[#26240a]">
            <div className="flex w-[55px] items-center border-r-2 border-[#b3b098] pl-[14px] pt-[2px]"><T w={28}>Edit</T></div>
            <div className="flex flex-1 items-center justify-center pl-[2px]"><Down w={12} h={7} fill="#fff" /></div>
          </div>
          <div className="absolute left-px top-[34px] z-10 flex h-[218px] w-[154px] flex-col border border-[#c8c5aa] bg-[#dec900] pl-[14px] pt-[13px] text-[16.5px] text-[#26240a] shadow-[2px_6px_9px_#aaa]">
            {items.map(([s, w, h]) => <div key={s} className={"flex shrink-0 items-center " + h}><T w={w}>{s}</T></div>)}
          </div>
          <svg width="262" height="142" className="absolute left-[113px] top-[40px] z-20 block">
            <path d="M5 135L255 6" stroke="#000" strokeWidth="6" />
            <path d="M3 132h5v5H3zM253 4h5v5h-5z" fill="#fff" stroke="#333" strokeWidth=".8" />
          </svg>
          {["M18 8l-6 7 6 7", "M12 8l6 7-6 7"].map((d, i) => (
            <React.Fragment key={d}>
              <div className={"mt-[7px] flex size-[29px] items-center justify-center rounded-full bg-gradient-to-b from-white to-[#ccc] " + (i === 0 ? "ml-[1202px]" : "ml-[25px]")}>
                <svg width="29" height="29" viewBox="0 0 30 30"><path d={d} fill="none" stroke="#aaa" strokeWidth="3.500" /></svg>
              </div>
              {i === 0 && <T w={55} className="ml-[27px] mt-[14px] font-['Noto_Sans'] text-[16px] leading-5">(3 of 7)</T>}
            </React.Fragment>
          ))}
          <div className="ml-[28px] flex gap-[9px] font-['Liberation_Sans'] text-[15.5px] font-bold">
            <div className="flex h-[37px] w-[124px] items-center justify-center rounded-[3px] border border-[#c0ac00] bg-[#dec900]"><T w={106} className="mt-px">Launch Wizard</T></div>
            <div className="ml-px flex h-[37px] w-[103px] items-center justify-center rounded-[3px] border border-[#c0ac00] bg-[#dec900]"><T w={84} className="mt-px">View Status</T></div>
            <div className="flex h-[37px] w-[84px] items-center justify-center rounded-[3px] border border-[#c0ac00] bg-[#dec900]"><T w={65} className="mt-px">View ROI</T></div>
          </div>
        </div>
        <div className="ml-3 mt-[27px] flex h-[364px] w-[1819px] shrink-0 flex-col border-2 border-[#8f8f8f] pr-px pt-[37px] font-['Noto_Sans'] text-[17px] text-[#808080]">
          {rows.map(([l, lw, v, vw, l2, l2w, v2, v2w], i) => (
            <div key={l} className={"flex h-[40.5px] shrink-0 items-center pt-[3px] " + (i < 7 ? "border-b border-[#c4c4c4] shadow-[0_1px_0_#6c6c6c]" : "")}>
              <div className="flex w-[216px] justify-end"><T w={lw}>{l}</T></div>
              <div className="ml-[16px] w-[470px] text-[16.5px] text-white [-webkit-text-stroke:.3px_white]">{v && <T w={vw}>{v}</T>}</div>
              <div className="flex w-[429px] justify-end">{l2 && <T w={l2w}>{l2}</T>}</div>
              <div className="ml-[16px] text-[16.5px] text-white [-webkit-text-stroke:.3px_white]">{v2 && <T w={v2w}>{v2}</T>}</div>
            </div>
          ))}
        </div>
        <div className="ml-3 mt-[13px] h-[60px] w-[1819px] shrink-0 border-2 border-[#8f8f8f] pl-[32px] pt-[9px] text-[16px] font-bold leading-5 text-[#555]">Other</div>
      </div>
      <Texture className="w-[23px]" />
    </div>
  );
}

function Canvas() {
  return (
    <div className="flex h-[748px] shrink-0">
      <div className="h-[748px] w-[1895px] bg-gradient-to-b from-[#c6d1e1] to-[#dce7f6] pl-[5px] pt-[5px]">
        <div className="flex h-[743px] w-[1889px] flex-col overflow-hidden">
          <BrowserTabs />
          <AddressBar />
          <Bookmarks />
          <CrmNav />
          <CrmPage />
        </div>
      </div>
      <div className="flex w-[25px] flex-col items-center justify-between bg-[#f0f0f0]">
        <svg width="25" height="26"><path d="M7.500 18l5-5.500 5 5.500" fill="none" stroke="#505050" strokeWidth="2.500" /></svg>
        <div className="mb-auto h-[477px] w-full bg-[#cdcdcd]" />
        <svg width="25" height="26"><path d="M7.500 10l5 5.500 5-5.500" fill="none" stroke="#505050" strokeWidth="2.500" /></svg>
      </div>
    </div>
  );
}

function Footer() {
  return (
    <>
      <div className="flex h-[26px] shrink-0 items-center bg-[#f0f0f0]">
        <svg width="26" height="26"><path d="M15.500 8l-5.500 5.500 5.500 5.500" fill="none" stroke="#505050" strokeWidth="2.500" /></svg>
        <div className="h-6 w-[1807px] bg-[#cdcdcd]" />
        <svg width="25" height="26" className="ml-[35px]"><path d="M10 8l5.500 5.500L10 19" fill="none" stroke="#505050" strokeWidth="2.500" /></svg>
      </div>
      <div className="flex h-[39px] shrink-0 border-t border-[#d7d7d7] bg-[#f0f0f0] text-[16.5px] text-[#1e1e1e]">
        <div className="flex h-full w-[245px] items-center border-r border-[#d7d7d7]">
          <svg width="19" height="19" className="ml-1"><path d="M9.500 1v17M1 9.500h17M7 3.500L9.500 1 12 3.500M7 15.500L9.500 18l2.500-2.500M3.500 7L1 9.500 3.500 12M15.500 7L18 9.500 15.500 12" fill="none" stroke="#1f3a5f" /></svg>
          <T w={89} className="ml-[6px] mt-[3px]">707, 513px</T>
        </div>
        <div className="flex h-full w-[245px] items-center border-r border-[#d7d7d7]">
          <svg width="22" height="20" fill="none" stroke="#1f3a5f" className="ml-1"><path d="M2.500 14V1M.5 3.500l2-2.500 2 2.500M6 17.500h15M18.500 15l2.500 2.500-2.500 2.500" /><path d="M6.500 1.500h14v12h-14z" strokeDasharray="1.500 1" /></svg>
          <T w={102} className="ml-[5px] mt-[3px]">251 × 130px</T>
        </div>
        <div className="flex h-full w-[245px] items-center border-r border-[#d7d7d7]">
          <svg width="22" height="20" fill="none" stroke="#1f3a5f" className="ml-1"><path d="M2.500 14V1M.5 3.500l2-2.500 2 2.500M6 17.500h15M18.500 15l2.500 2.500-2.500 2.500" /><path d="M6.500 1.500h14v12h-14z" fill="#e3f1f7" /></svg>
          <T w={121} className="ml-[6px] mt-[3px]">1920 × 1080px</T>
        </div>
        <div className="h-full w-[245px] border-r border-[#d7d7d7]" />
        <div className="h-full w-[647px] border-r border-[#d7d7d7]" />
        <T w={44} className="ml-[25px] mt-[9px] leading-6">100%</T>
        <svg width="24" height="24" className="ml-[10px] mt-[5px]"><circle cx="12" cy="12" r="11" fill="#f3f3f3" stroke="#777" /><path d="M6 12.500h12" stroke="#555" strokeWidth="3" /></svg>
        <svg width="128" height="29" className="ml-[17px] mt-[4px]"><path d="M.5 10.500h127v5H.5z" fill="#e7eaea" stroke="#d0d5d5" /><path d="M57 0h15v23l-5.500 5h-4L57 23z" fill="#0078d7" /></svg>
        <svg width="24" height="24" className="ml-[14px] mt-[5px]"><circle cx="12" cy="12" r="11" fill="#f3f3f3" stroke="#777" /><path d="M6 12.500h12M12 6.500v12" stroke="#555" strokeWidth="3" /></svg>
      </div>
    </>
  );
}

function Cell({ className, children }) {
  return (
    <div className={"flex h-[60px] shrink-0 items-center justify-center pb-[1px] " + className}>
      {children}
    </div>
  );
}

function Taskbar() {
  return (
    <div className="flex h-[60px] shrink-0 bg-black text-white">
      <div className="flex w-[72px] items-center justify-center">
        <svg width="24" height="24" viewBox="0 0 24 24" fill="#fff"><path d="M0 3.400L9.800 2v9.500H0zM10.800 1.800L24 0v11.500H10.800zM0 12.500h9.800V22L0 20.600zM10.800 12.500H24V24l-13.200-1.800z" /></svg>
      </div>
      <div className="flex w-[516px] items-center bg-[#333] text-[19.500px] text-[#a0a0a0]">
        <T w={274} className="ml-[18px] mt-[2px]">Search the web and Windows</T>
      </div>
      <div className="flex w-[928px] bg-[#0e0a06] bg-gradient-to-r from-[#120c05] via-[#0c0805] to-[#130d08]">
        <Cell className="w-[70px]">
          <svg width="31" height="20" fill="none" stroke="#fff" strokeWidth="1.300"><path d="M6.500.7h17v18.600h-17zM4 3.500H1v13h3M26.500 3.500h3.500v13h-3.500" /></svg>
        </Cell>
        <Cell className="ml-[3px] w-[76px]">
          <svg width="36" height="36" viewBox="0 0 36 36">
            <rect width="36" height="36" rx="5" fill="#171717" /><path d="M3 0h30q3 0 3 4v5Q20 4 0 9V4q0-4 3-4z" fill="#777" opacity=".6" />
            <path d="M6 9l5-1q2-5 5-1l4-1-1 5q3 2 0 4l1 3-5-1q-2 3-4 0l-4 1 1-4q-5-1-1-4z" fill="#e8264f" />
            <path d="M20 8l5 1q2-4 4 0l4 1-1 4q2 3-1 4l1 3-5-1q-3 2-4-1l-4 1 1-5q-2-3 1-4z" fill="#f5c31d" />
            <path d="M4 19l5-1q2-4 4 0l4-1 1 5q-3 2 0 4l-1 3-4-1q-3 3-4 0l-5 1 1-4q-4-3 0-4z" fill="#2358b0" />
            <path d="M17 20l5 1q2-4 4 0l5-1-1 4q3 2 0 4l1 4-4-1q-2 2-4-1l-5 1 1-4q-4-2-1-3z" fill="#79a92c" />
          </svg>
        </Cell>
        <Cell className="w-[74px]">
          <svg width="32" height="37" viewBox="0 0 32 37"><path d="M7 11V6q3-8 10-3l4 6M11 9q1-10 7-8 4 2 5 8" fill="none" stroke="#fff" strokeWidth="1.600" /><path d="M0 11l32-3v26l-7 3-25-5z" fill="#fff" /><path d="M7 17.500l5-.8v6H7zM13.500 16.500l7-1v7.200h-7zM7 24h5v6l-5-1zM13.500 24h7v7.200l-7-1z" fill="#120c05" /></svg>
        </Cell>
        <Cell className="w-[75px]">
          <svg width="36" height="36" viewBox="0 0 36 36"><rect width="36" height="36" rx="3" fill="#fff" /><path d="M12.500 7l5.500 4-5.500 4L7 11zM23.500 7l5.500 4-5.500 4-5.500-4zM12.500 15l5.500 4-5.500 4L7 19zM23.500 15l5.500 4-5.500 4-5.500-4zM18 21l5 3.500-5 3.500-5-3.500z" fill="#0a7ee6" /></svg>
        </Cell>
        <Cell className="w-[75px]">
          <svg width="34" height="34" viewBox="0 0 34 34">
            <circle cx="17" cy="17" r="17" fill="#fbc831" /><path d="M2.300 8.500A17 17 0 0 1 31.700 8.500H17L10 21z" fill="#db4437" />
            <path d="M2.300 8.500A17 17 0 0 0 15 34l7-12-5 3-7-4z" fill="#1da05c" /><circle cx="17" cy="17" r="8" fill="#fff" /><circle cx="17" cy="17" r="6.300" fill="#4a86f0" />
          </svg>
        </Cell>
        <Cell className="w-[75px]">
          <svg width="34" height="34" viewBox="0 0 34 34"><rect width="34" height="34" rx="2" fill="#2c6690" /><path d="M0 22q15-9 34-8v18q0 2-2 2H2q-2 0-2-2z" fill="#1f5277" /><path d="M5 4q7 0 11 6 6 4 6 10l7 5q-5 0-7 3-1-3-5-6-2 3-4 5-1-4-2-7-3-8-6-16z" fill="none" stroke="#c9dbe7" strokeWidth="1.200" /><path d="M25 4l5 5" stroke="#fff" strokeWidth="2.500" /></svg>
        </Cell>
        <Cell className="w-[76px]">
          <svg width="34" height="34" viewBox="0 0 34 34"><circle cx="17" cy="17" r="15" fill="#0fa9e8" /><circle cx="9" cy="9" r="9" fill="#0fa9e8" /><circle cx="25" cy="25" r="9" fill="#0fa9e8" /><path d="M23 11q-2-3-7-3-6 0-6 4 0 3 6 4.500 7 1.500 7 5 0 4-6 4t-7-4" fill="none" stroke="#fff" strokeWidth="4" /></svg>
        </Cell>
        <Cell className="ml-[2px] w-[73px] bg-[#3f3a37]"><PaintIcon w={36} h={36} /></Cell>
      </div>
      <div className="flex flex-1">
        <svg width="46" height="46" viewBox="0 0 46 46" className="ml-[46px] mt-[7px] block"><circle cx="15" cy="30" r="14.500" fill="#2191cf" stroke="#fff" strokeWidth="2" /><path d="M8 23q6-6 8 0v7" stroke="#fff" strokeWidth="4" fill="none" /><circle cx="16" cy="38" r="2.500" fill="#fff" /><rect x="14" width="32" height="32" rx="2" fill="#f58220" /><path d="M21 4h6v18h-6zM33 4h6v18h-6zM21 24h6v5h-6zM33 24h6v5h-6z" fill="#fff" /></svg>
        <svg width="18" height="10" className="ml-[10px] mt-6 block"><path d="M1 9l8-8 8 8" fill="none" stroke="#fff" strokeWidth="1.400" /></svg>
        <svg width="23" height="13" className="ml-[16px] mt-6 block"><path d="M.7.7h19v11.600H.7zM20 4h2v5h-2" fill="none" stroke="#fff" strokeWidth="1.300" /><path d="M2.500 2.500h13v8h-13z" fill="#fff" /></svg>
        <svg width="20" height="20" className="ml-[16px] mt-[21px] block" fill="none" stroke="#ddd" strokeWidth="1.400"><path d="M1 19Q2 3 19 1.500M6 19Q7 8 19 6.500M11 19q1-7 8-7.500" /><circle cx="17" cy="17" r="2" fill="#fff" stroke="none" /></svg>
        <svg width="24" height="20" className="ml-[13px] mt-5 block" fill="none" stroke="#fff" strokeWidth="1.300"><path d="M1 6.500h4l5-5v17l-5-5H1zM13 7q2 3 0 6M16 4.500q4 5.500 0 11M19 2q6 8 0 16" /></svg>
        <svg width="24" height="24" className="ml-[11px] mt-[18px] block"><path d="M0 0h24v19H15l-4 5-4-5H0z" fill="#fff" /><path d="M5 5.500h14M5 9.500h14M5 13.500h9" stroke="#000" strokeWidth="1.300" /></svg>
        <div className="ml-[19px] mt-[4px] flex w-[95px] flex-col items-center text-[16.5px] leading-[26px]">
          <T w={65}>8:30 PM</T>
          <T w={94}>08/05/2016</T>
        </div>
        <div className="ml-auto mr-[7px] h-full w-px bg-[#666]" />
      </div>
    </div>
  );
}

function TaskIndicators() {
  return (
    <div className="relative z-10 -mt-[3px] flex h-[3px] shrink-0">
      <div className="ml-[895px] w-[61px] bg-[#fcd6a4]" />
      <div className="ml-[89px] w-[61px] bg-[#fcd6a4]" />
      <div className="ml-[8px] w-[73px] bg-[#fcd6a4]" />
    </div>
  );
}

export default function App() {
  return (
    <div className="flex h-[1080px] w-[1920px] flex-col overflow-hidden bg-white font-['Open_Sans',sans-serif]">
      <TitleBar />
      <RibbonTabs />
      <Ribbon />
      <Canvas />
      <Footer />
      <Taskbar />
      <TaskIndicators />
    </div>
  );
}
